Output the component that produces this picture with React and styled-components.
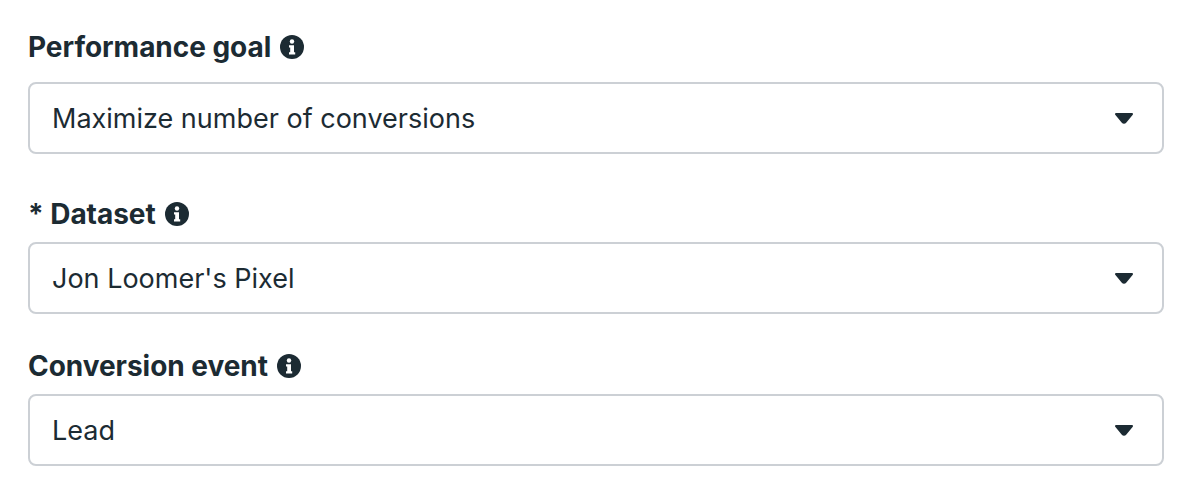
import React from 'react';
import styled, { createGlobalStyle } from 'styled-components';

const GlobalStyle = createGlobalStyle`
  html, body {
    margin: 0;
    padding: 0;
    background: #fff;
  }
`;

const Page = styled.div`
  width: 1194px;
  height: 482px;
  box-sizing: border-box;
  padding: 30px 30px 0 28px;
  font-family: 'Inter', 'Liberation Sans', sans-serif;
  color: #1c2b33;
`;

const Field = styled.div`
  margin-bottom: ${(props) => props.gap}px;
`;

const Label = styled.div`
  display: flex;
  align-items: center;
  gap: 9px;
  height: 34px;
  margin-bottom: ${(props) => props.below}px;
  font-size: 28px;
  font-weight: 700;
  letter-spacing: -0.04px;
`;

const Select = styled.div`
  display: flex;
  align-items: center;
  justify-content: space-between;
  box-sizing: border-box;
  height: 72px;
  padding: 0 28px 0 22px;
  border: 2px solid #ccd0d5;
  border-radius: 8px;
  font-size: 27px;
`;

function InfoIcon() {
  return (
    <svg width="24" height="24" viewBox="0 0 24 24">
      <circle cx="12" cy="12" r="12" fill="#1c2b33" />
      <circle cx="12" cy="6.5" r="2.2" fill="#fff" />
      <path d="M9 10.2h5v7h1.2v2.2H9v-2.2h1.2v-4.8H9z" fill="#fff" />
    </svg>
  );
}

function CaretIcon() {
  return (
    <svg width="20" height="13" viewBox="0 0 20 13">
      <path
        d="M2 2h16l-6.6 8.2a1.8 1.8 0 0 1-2.8 0z"
        fill="#1c2b33"
        stroke="#1c2b33"
        strokeWidth="2"
        strokeLinejoin="round"
      />
    </svg>
  );
}

const fields = [
  { label: 'Performance goal', value: 'Maximize number of conversions', below: 18, gap: 43 },
  { label: '* Dataset', value: "Jon Loomer's Pixel", below: 11, gap: 35 },
  { label: 'Conversion event', value: 'Lead', below: 11, gap: 0 },
];

export default function App() {
  return (
    <Page>
      <GlobalStyle />
      {fields.map((f) => (
        <Field key={f.label} gap={f.gap}>
          <Label below={f.below}>
            {f.label}
            <InfoIcon />
          </Label>
          <Select>
            {f.value}
            <CaretIcon />
          </Select>
        </Field>
      ))}
    </Page>
  );
}
